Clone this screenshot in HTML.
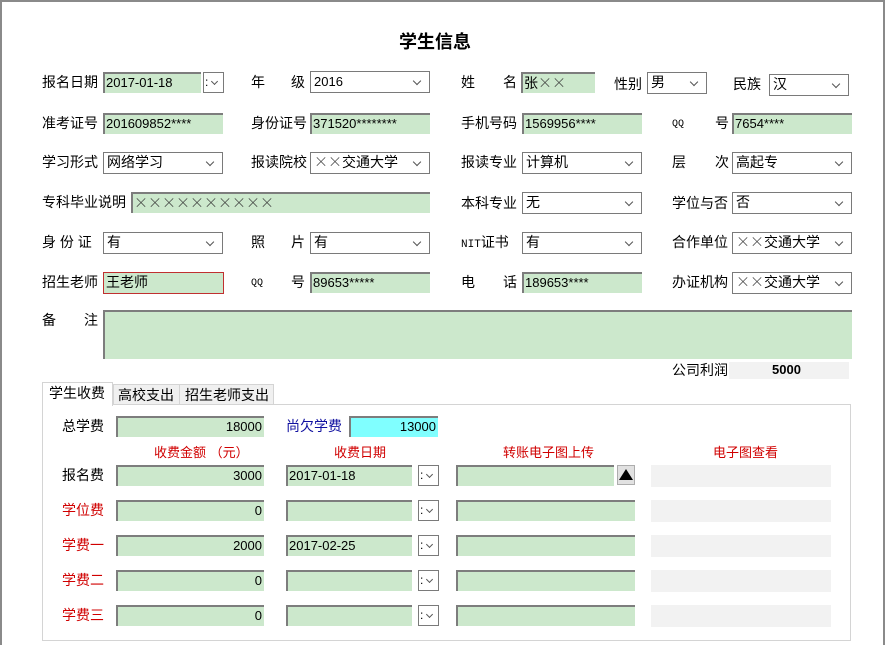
<!DOCTYPE html>
<html><head><meta charset="utf-8"><style>
*{margin:0;padding:0;box-sizing:border-box}
body{width:885px;height:645px;background:#fff;position:relative;overflow:hidden;font-family:"Liberation Sans","Noto Sans CJK SC","WenQuanYi Zen Hei",sans-serif;font-size:14px;color:#000}
.frame{position:absolute;left:0;top:0;width:885px;height:645px;border-left:2px solid #8a8a8a;border-top:2px solid #8a8a8a;border-right:2px solid #8a8a8a}
.a{position:absolute;white-space:nowrap;line-height:20px}
.l{position:absolute;white-space:nowrap;line-height:20px}
.i{position:absolute;background:#cce8cc;border-top:2px solid #7d7d7d;border-left:2px solid #7d7d7d;font-size:13px;line-height:18px;padding-left:1px;white-space:nowrap;overflow:hidden}
.s{position:absolute;background:#fff;border:1px solid #7a7a7a;font-size:14px;line-height:19px;padding-left:3px;white-space:nowrap}
.s:after{content:"";position:absolute;right:9px;top:6px;width:5px;height:5px;border-right:1px solid #555;border-bottom:1px solid #555;transform:rotate(45deg)}
.d{position:absolute;width:21px;height:21px;border:1px solid #7a7a7a;background:#fff}
.d:before{content:":";position:absolute;left:1px;top:0;font-size:12px;line-height:19px}
.d:after{content:"";position:absolute;right:6px;top:6px;width:4px;height:4px;border-right:1px solid #555;border-bottom:1px solid #555;transform:rotate(45deg)}
.r{text-align:right;padding-right:2px}
.red{color:#d00000}
.g{position:absolute;background:#f2f2f2}
.h{position:absolute;color:#d00000;font-size:13px;line-height:16px;white-space:nowrap}
.x{font-family:"Noto Sans CJK SC","WenQuanYi Zen Hei",sans-serif;font-weight:300;color:#333}
.m{font-family:"Liberation Mono",monospace}
</style></head><body>
<div class="frame"></div>
<div class="a" style="left:399px;top:31px;font-size:18px;font-weight:bold;line-height:22px">学生信息</div>

<!-- row1 -->
<div class="l" style="left:42px;top:72px">报名日期</div>
<div class="i" style="left:103px;top:72px;width:98px;height:21px">2017-01-18</div>
<div class="d" style="left:203px;top:72px"></div>
<div class="l" style="left:251px;top:72px">年</div><div class="l" style="left:291px;top:72px">级</div>
<div class="s" style="left:310px;top:71px;width:120px;height:22px;font-size:13px">2016</div>
<div class="l" style="left:461px;top:72px">姓</div><div class="l" style="left:503px;top:72px">名</div>
<div class="i" style="left:521px;top:72px;width:74px;height:21px;font-size:14px">张<span class="x">××</span></div>
<div class="l" style="left:614px;top:74px">性别</div>
<div class="s" style="left:647px;top:72px;width:60px;height:22px">男</div>
<div class="l" style="left:733px;top:74px">民族</div>
<div class="s" style="left:769px;top:74px;width:80px;height:22px">汉</div>

<!-- row2 -->
<div class="l" style="left:42px;top:113px">准考证号</div>
<div class="i" style="left:103px;top:113px;width:120px;height:21px">201609852****</div>
<div class="l" style="left:251px;top:113px">身份证号</div>
<div class="i" style="left:310px;top:113px;width:120px;height:21px">371520********</div>
<div class="l" style="left:461px;top:113px">手机号码</div>
<div class="i" style="left:522px;top:113px;width:120px;height:21px">1569956****</div>
<div class="l m" style="left:672px;top:115px;font-size:10px">QQ</div><div class="l" style="left:715px;top:113px">号</div>
<div class="i" style="left:732px;top:113px;width:120px;height:21px">7654****</div>

<!-- row3 -->
<div class="l" style="left:42px;top:152px">学习形式</div>
<div class="s" style="left:103px;top:152px;width:120px;height:22px">网络学习</div>
<div class="l" style="left:251px;top:152px">报读院校</div>
<div class="s" style="left:310px;top:152px;width:120px;height:22px"><span class="x">××</span>交通大学</div>
<div class="l" style="left:461px;top:152px">报读专业</div>
<div class="s" style="left:522px;top:152px;width:120px;height:22px">计算机</div>
<div class="l" style="left:672px;top:152px">层</div><div class="l" style="left:715px;top:152px">次</div>
<div class="s" style="left:732px;top:152px;width:120px;height:22px">高起专</div>

<!-- row4 -->
<div class="l" style="left:42px;top:192px">专科毕业说明</div>
<div class="i" style="left:131px;top:192px;width:299px;height:21px;font-size:14px"><span class="x">××××××××××</span></div>
<div class="l" style="left:461px;top:193px">本科专业</div>
<div class="s" style="left:522px;top:192px;width:120px;height:22px">无</div>
<div class="l" style="left:672px;top:193px">学位与否</div>
<div class="s" style="left:732px;top:192px;width:120px;height:22px">否</div>

<!-- row5 -->
<div class="l" style="left:42px;top:232px">身 份 证</div>
<div class="s" style="left:103px;top:232px;width:120px;height:22px">有</div>
<div class="l" style="left:251px;top:232px">照</div><div class="l" style="left:291px;top:232px">片</div>
<div class="s" style="left:310px;top:232px;width:120px;height:22px">有</div>
<div class="l" style="left:461px;top:232px;font-size:14px"><span class="m" style="font-size:11px">NIT</span>证书</div>
<div class="s" style="left:522px;top:232px;width:120px;height:22px">有</div>
<div class="l" style="left:672px;top:232px">合作单位</div>
<div class="s" style="left:732px;top:232px;width:120px;height:22px"><span class="x">××</span>交通大学</div>

<!-- row6 -->
<div class="l" style="left:42px;top:272px">招生老师</div>
<div class="i" style="left:103px;top:272px;width:121px;height:22px;border:1px solid #c03030;font-size:14px;padding-left:2px">王老师</div>
<div class="l m" style="left:251px;top:274px;font-size:10px">QQ</div><div class="l" style="left:291px;top:272px">号</div>
<div class="i" style="left:310px;top:272px;width:120px;height:21px">89653*****</div>
<div class="l" style="left:461px;top:272px">电</div><div class="l" style="left:503px;top:272px">话</div>
<div class="i" style="left:522px;top:272px;width:120px;height:21px">189653****</div>
<div class="l" style="left:672px;top:272px">办证机构</div>
<div class="s" style="left:732px;top:272px;width:120px;height:22px"><span class="x">××</span>交通大学</div>

<div class="l" style="left:42px;top:310px">备</div><div class="l" style="left:84px;top:310px">注</div>
<div class="i" style="left:103px;top:310px;width:749px;height:49px"></div>

<div class="l" style="left:672px;top:360px">公司利润</div>
<div class="g" style="left:729px;top:362px;width:120px;height:17px"></div>
<div class="a" style="left:772px;top:360px;font-weight:bold;font-size:13px">5000</div>

<!-- tabs -->
<div style="position:absolute;left:42px;top:404px;width:809px;height:237px;border:1px solid #d4d4d4;background:#fff"></div>
<div style="position:absolute;left:113px;top:384px;width:67px;height:21px;background:#f0f0f0;border:1px solid #d4d4d4"></div>
<div style="position:absolute;left:180px;top:384px;width:94px;height:21px;background:#f0f0f0;border:1px solid #d4d4d4;border-left:none"></div>
<div style="position:absolute;left:42px;top:382px;width:71px;height:24px;background:#fff;border:1px solid #d4d4d4;border-bottom:none"></div>
<div class="l" style="left:49px;top:383px">学生收费</div>
<div class="l" style="left:118px;top:385px">高校支出</div>
<div class="l" style="left:185px;top:385px">招生老师支出</div>

<div class="l" style="left:62px;top:416px">总学费</div>
<div class="i r" style="left:116px;top:416px;width:148px;height:21px">18000</div>
<div class="l" style="left:286px;top:416px;color:#1010a0">尚欠学费</div>
<div class="i r" style="left:349px;top:416px;width:89px;height:21px;background:#80ffff">13000</div>

<div class="h" style="left:154px;top:445px">收费金额 （元）</div>
<div class="h" style="left:334px;top:445px">收费日期</div>
<div class="h" style="left:503px;top:445px">转账电子图上传</div>
<div class="h" style="left:713px;top:445px">电子图查看</div>

<div class="l" style="left:62px;top:465px">报名费</div>
<div class="i r" style="left:116px;top:465px;width:148px;height:21px">3000</div>
<div class="i" style="left:286px;top:465px;width:126px;height:21px">2017-01-18</div>
<div class="d" style="left:418px;top:465px"></div>
<div class="i" style="left:456px;top:465px;width:158px;height:21px"></div>
<div style="position:absolute;left:617px;top:465px;width:18px;height:20px;background:#e1e1e1;border:1px solid #adadad"></div>
<div style="position:absolute;left:619px;top:469px;width:0;height:0;border-left:7px solid transparent;border-right:7px solid transparent;border-bottom:11px solid #000"></div>
<div class="g" style="left:651px;top:465px;width:180px;height:22px"></div>

<div class="l red" style="left:62px;top:500px">学位费</div>
<div class="i r" style="left:116px;top:500px;width:148px;height:21px">0</div>
<div class="i" style="left:286px;top:500px;width:126px;height:21px"></div>
<div class="d" style="left:418px;top:500px"></div>
<div class="i" style="left:456px;top:500px;width:179px;height:21px"></div>
<div class="g" style="left:651px;top:500px;width:180px;height:22px"></div>

<div class="l red" style="left:62px;top:535px">学费一</div>
<div class="i r" style="left:116px;top:535px;width:148px;height:21px">2000</div>
<div class="i" style="left:286px;top:535px;width:126px;height:21px">2017-02-25</div>
<div class="d" style="left:418px;top:535px"></div>
<div class="i" style="left:456px;top:535px;width:179px;height:21px"></div>
<div class="g" style="left:651px;top:535px;width:180px;height:22px"></div>

<div class="l red" style="left:62px;top:570px">学费二</div>
<div class="i r" style="left:116px;top:570px;width:148px;height:21px">0</div>
<div class="i" style="left:286px;top:570px;width:126px;height:21px"></div>
<div class="d" style="left:418px;top:570px"></div>
<div class="i" style="left:456px;top:570px;width:179px;height:21px"></div>
<div class="g" style="left:651px;top:570px;width:180px;height:22px"></div>

<div class="l red" style="left:62px;top:605px">学费三</div>
<div class="i r" style="left:116px;top:605px;width:148px;height:21px">0</div>
<div class="i" style="left:286px;top:605px;width:126px;height:21px"></div>
<div class="d" style="left:418px;top:605px"></div>
<div class="i" style="left:456px;top:605px;width:179px;height:21px"></div>
<div class="g" style="left:651px;top:605px;width:180px;height:22px"></div>
</body></html>
